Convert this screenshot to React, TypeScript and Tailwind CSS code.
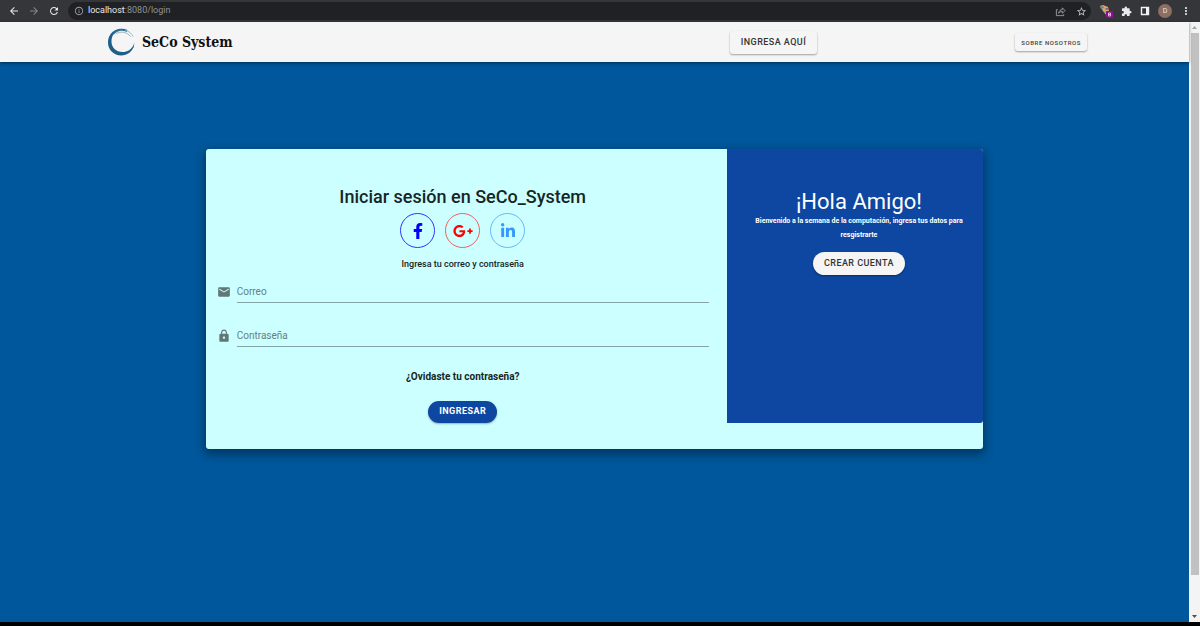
import type { ReactNode } from "react";
import { FaFacebookF, FaGooglePlusG, FaLinkedinIn } from "react-icons/fa";
import {
  MdArrowBack,
  MdArrowForward,
  MdEmail,
  MdExtension,
  MdInfoOutline,
  MdLock,
  MdMoreVert,
  MdRefresh,
  MdStarBorder,
} from "react-icons/md";

function BrowserBar() {
  return (
    <div className="flex h-[22px] shrink-0 items-center bg-[#35363a] pr-2 pl-2 text-[#e8eaed]">
      <button aria-label="Atrás" className="mr-2 text-xs"><MdArrowBack /></button>
      <button aria-label="Adelante" className="mr-2 text-xs text-[#85868a]"><MdArrowForward /></button>
      <button aria-label="Recargar" className="mr-2 text-xs"><MdRefresh /></button>
      <div className="flex h-[18px] flex-1 items-center rounded-full bg-[#202124] pr-1 pl-1.5">
        <MdInfoOutline className="mr-1 size-2.5 text-[#9aa0a6]" />
        <span className="flex-1 font-[Roboto,sans-serif] text-[9px] text-[#8f9296]">
          <span className="text-[#e8eaed]">localhost</span>:8080/login
        </span>
        <button aria-label="Compartir" className="mr-2.5">
          <svg viewBox="0 0 12 12" className="size-[11px] fill-none stroke-[#9aa0a6]">
            <path d="M3 4H1.5v6.5h8V9M4 8c.3-3 2-4 4-4V2l3 3-3 3V6C6 6 5 6.5 4 8Z" />
          </svg>
        </button>
        <button aria-label="Favorito" className="text-[11px] text-[#c4c7c5]"><MdStarBorder /></button>
      </div>
      <div className="flex items-center gap-2 pl-2">
        <button aria-label="Extensión">
          <svg viewBox="0 0 14 14" className="size-3.5">
            <path d="m1 2 3-1 5 2 1 4-2 3-4-3Z" fill="#e0a070" />
            <path d="m1 3 3-1 1 2-3 1Z" fill="#5f8a8a" />
            <path d="m6 4 3 0 0 2-2 0Z" fill="#6d7b80" />
            <path d="m4 7 3 0 1 3-1 1Z" fill="#8fa98a" />
            <rect x="7" y="7" width="7" height="7" rx="1" fill="#87128a" />
            <path d="M9.5 9h2v3h-2zM9.5 10.5h2" fill="none" stroke="#f3d8f3" strokeWidth=".8" />
          </svg>
        </button>
        <button aria-label="Extensiones" className="text-[11px]"><MdExtension /></button>
        <button aria-label="Panel lateral">
          <svg viewBox="0 0 10 10" className="size-2.5">
            <path d="M1.5 1.5h7v7h-7Z" fill="none" stroke="#f1f3f4" strokeWidth="1.4" />
            <path d="M6 1h3v8H6Z" fill="#f1f3f4" />
          </svg>
        </button>
        <button className="flex size-3.5 items-center justify-center rounded-full bg-[#8d6e63] text-[7px]">D</button>
        <button aria-label="Menú" className="text-xs"><MdMoreVert /></button>
      </div>
    </div>
  );
}

function Logo() {
  return (
    <a href="#inicio" className="flex flex-1 items-center gap-[7px]">
      <svg viewBox="0 0 28 28" className="size-7">
        <path
          d="M12 1.2C5 2 1 8 1 14.5 1 22 7 27.5 14 27.5c6.500 0 12-4 13-11-2.500 5-6.500 7.500-11.500 7.500C9 24 4.500 19.500 4.500 13.500 4.500 8 7 4 12 1.200Z"
          fill="#1e5f8a"
        />
        <path d="M6 6C10 1 16 .8 20 3" fill="none" stroke="#2f6d94" strokeWidth="2" />
        <path d="M9 5.500c5-2.500 11-1.500 14.500 3M18 2.200c4 1 6.500 3 8 6.500" fill="none" stroke="#8fb0c6" strokeWidth=".9" />
        <path d="m27.500 14.500-1 5-2.500 2c1.500-2 2.500-4 3.500-7Z" fill="#1e5f8a" />
      </svg>
      <span className="font-['DejaVu_Serif_Condensed','DejaVu_Serif',serif] text-[14px] font-bold text-[#111]">
        SeCo System
      </span>
    </a>
  );
}

function Social({ label, className, children }: { label: string; className: string; children: ReactNode }) {
  return (
    <a
      href="#social"
      aria-label={label}
      className={`flex size-[35px] items-center justify-center rounded-full border ${className}`}
    >
      {children}
    </a>
  );
}

function Field({ id, type, label, icon }: { id: string; type: string; label: string; icon: ReactNode }) {
  return (
    <div className="flex h-11 items-start gap-1.5">
      <label htmlFor={id} aria-label={label} className="pt-[5px] text-[#5f7777]">
        {icon}
      </label>
      <input
        id={id}
        type={type}
        placeholder={label}
        className="h-[23px] min-w-0 flex-1 border-b border-[#84a5a5] bg-transparent text-[10px] outline-none placeholder:text-[#668080]"
      />
    </div>
  );
}

export default function App() {
  return (
    <div className="flex min-h-screen flex-col bg-[#01579b] font-[Roboto,sans-serif] text-[#182525]">
      <BrowserBar />
      <div className="flex flex-1">
        <div className="flex flex-1 flex-col">
          <header className="z-10 flex h-10 items-center bg-[#f5f5f5] pr-[102px] pl-[107px] shadow-[0_1px_3px_rgba(0,0,0,0.5)]">
            <Logo />
            <button className="mr-[198px] h-[23px] rounded-[3px] bg-[#f5f5f5] px-[11px] pt-px text-[9px] font-medium tracking-wider text-[#333] shadow-[0_1px_2px_rgba(0,0,0,0.35)]">
              INGRESA AQUÍ
            </button>
            <button className="h-[18px] rounded-[3px] bg-[#f5f5f5] px-1.5 text-[6px] font-medium tracking-widest text-[#444] shadow-[0_1px_2px_rgba(0,0,0,0.35)]">
              SOBRE NOSOTROS
            </button>
          </header>
          <main className="flex flex-1 justify-center pt-[87px]">
            <section className="flex w-[65.4%] items-start self-start overflow-hidden rounded-[3px] bg-[#ccffff] pb-[26px] shadow-[0_4px_10px_2px_rgba(0,0,0,0.35)]">
              <form className="flex w-[67%] flex-col pt-9 pr-[18px] pl-[11px]" onSubmit={(e) => e.preventDefault()}>
                <h1 className="text-center text-lg leading-6 font-medium">Iniciar sesión en SeCo_System</h1>
                <div className="mt-1 flex justify-center gap-2.5">
                  <Social label="Facebook" className="border-[#3333ff] text-[#0000ff]">
                    <FaFacebookF className="size-4" />
                  </Social>
                  <Social label="Google Plus" className="border-[#f06060] text-[#ff0000]">
                    <FaGooglePlusG className="size-5" />
                  </Social>
                  <Social label="LinkedIn" className="border-[#65b8ff] text-[#3399ff]">
                    <FaLinkedinIn className="size-4" />
                  </Social>
                </div>
                <p className="mt-2.5 text-center text-[9px] leading-3 font-medium">Ingresa tu correo y contraseña</p>
                <div className="mt-2.5">
                  <Field id="correo" type="email" label="Correo" icon={<MdEmail className="size-[14px]" />} />
                  <Field id="contrasena" type="password" label="Contraseña" icon={<MdLock className="size-[14px]" />} />
                </div>
                <a href="#recuperar" className="mt-px self-center text-[10px] leading-4 font-bold">
                  ¿Ovidaste tu contraseña?
                </a>
                <button className="mt-4 h-[22px] self-center rounded-full bg-[#0d47a1] px-[11px] text-[9px] font-bold tracking-wider text-white shadow-[0_1px_2px_rgba(0,0,0,0.3)]">
                  INGRESAR
                </button>
              </form>
              <aside className="flex w-[33%] flex-col items-center self-stretch rounded-br-[3px] bg-[#0d47a1] pt-10 pr-3 pl-5 text-center text-white">
                <h2 className="text-[22px] leading-[25px]">¡Hola Amigo!</h2>
                <p className="text-[7px] leading-[14px] font-bold">
                  Bienvenido a la semana de la computación, ingresa tus datos para resgistrarte
                </p>
                <button className="mt-2.5 h-[23px] rounded-full bg-[#f5f5f5] px-[11px] text-[9px] font-medium tracking-wider text-[#333] shadow-[0_1px_2px_rgba(0,0,0,0.4)]">
                  CREAR CUENTA
                </button>
              </aside>
            </section>
          </main>
        </div>
        <div aria-hidden="true" className="flex w-[11px] flex-col items-center bg-[#f4f4f4]">
          <svg viewBox="0 0 11 11" className="size-[11px]"><path d="m3 7 2.5-3L8 7Z" fill="#a3a3a3" /></svg>
          <div className="w-2 flex-11 bg-[#c1c1c1]" />
          <div className="flex-[0.72]" />
          <svg viewBox="0 0 11 11" className="size-[11px]"><path d="m3 4 2.5 3L8 4Z" fill="#505050" /></svg>
        </div>
      </div>
      <div className="h-1 bg-black" />
    </div>
  );
}
